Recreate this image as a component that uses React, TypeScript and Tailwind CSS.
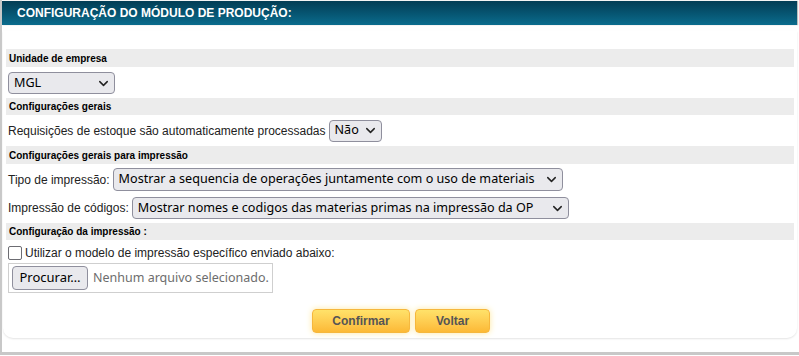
import { ChevronDown } from "lucide-react";

type Opt = { label: string; width: string; height?: string };

function Select({ label, width, height = "h-[22px]" }: Opt) {
	return (
		<div
			className={`flex ${height} shrink-0 ${width} items-center justify-between rounded-[4px] border border-[#8f8f9d] bg-[#e9e9ed] pl-[5px] pr-[3px] text-[12.6px] text-black`}
			style={{ fontFamily: '"Noto Sans", sans-serif' }}
		>
			<span className="whitespace-nowrap leading-none">{label}</span>
			<ChevronDown className="h-[15px] w-[15px] shrink-0 text-[#222]" strokeWidth={2.3} />
		</div>
	);
}

function SectionTitle({ children, h = "h-[18px]" }: { children: React.ReactNode; h?: string }) {
	return (
		<div className={`flex ${h} items-center bg-[#ececec] px-[3px] text-[10px] font-bold text-black`}>
			{children}
		</div>
	);
}

export default function App() {
	return (
		<div
			className="h-[356px] w-[799px] bg-white"
			style={{ fontFamily: '"Liberation Sans", Arial, sans-serif' }}
		>
			<div className="h-[355px] border-b-[3px] border-l-[2px] border-[#c8c8c8] pt-px">
				<div className="flex h-[24px] w-[795px] items-center bg-gradient-to-b from-[#033d55] to-[#0b6c8d] pl-[15px] text-[12px] font-bold text-white shadow-[1px_0_1px_#bbb]">
					CONFIGURAÇÃO DO MÓDULO DE PRODUÇÃO:
				</div>
				<div className="ml-px mt-[6px] h-[307px] w-[794px] rounded-b-[10px] shadow-[0_1px_2px_#e4e4e4] px-[3px] pt-[18px]">
					<div className="w-[788px]">
						<SectionTitle>Unidade de empresa</SectionTitle>
						<div className="h-[31px] px-[2px] pt-[5px]">
							<Select label="MGL" width="w-[107px]" />
						</div>
						<SectionTitle h="h-[17px]">Configurações gerais</SectionTitle>
						<div className="flex h-[31px] items-center gap-[3px] whitespace-nowrap px-[2px] text-[12px] text-[#222]">
							<span>Requisições de estoque são automaticamente processadas</span>
							<Select label="Não" width="w-[53px]" />
						</div>
						<SectionTitle>Configurações gerais para impressão</SectionTitle>
						<div className="flex items-center gap-[3px] whitespace-nowrap px-[2px] pt-[4px] text-[12px] text-[#222]">
							<span>Tipo de impressão:</span>
							<Select
								label="Mostrar a sequencia de operações juntamente com o uso de materiais"
								width="w-[450px]"
								height="h-[23px]"
							/>
						</div>
						<div className="flex items-center gap-[3px] whitespace-nowrap px-[2px] pb-[4px] pt-[6px] text-[12px] text-[#222]">
							<span>Impressão de códigos:</span>
							<Select
								label="Mostrar nomes e codigos das materias primas na impressão da OP"
								width="w-[437px]"
							/>
						</div>
						<SectionTitle h="h-[17px]">Configuração da impressão :</SectionTitle>
						<div className="flex h-[21px] items-end gap-[3px] whitespace-nowrap px-[2px] text-[12px] text-[#222]">
							<span className="mb-[1px] h-[14px] w-[14px] rounded-[2px] border-[1.5px] border-[#6c6c72] bg-white" />
							<span className="leading-[16px]">Utilizar o modelo de impressão específico enviado abaixo:</span>
						</div>
						<div
							className="ml-[2px] mt-[2px] flex h-[30px] w-[265px] items-center gap-[5px] whitespace-nowrap border border-[#cfcfcf] px-[3px] text-[13px]"
							style={{ fontFamily: '"Noto Sans", sans-serif' }}
						>
							<span className="flex h-[24px] w-[76px] items-center justify-center rounded-[4px] border border-[#8f8f9d] bg-[#e9e9ed] text-black">
								Procurar…
							</span>
							<span className="text-[12.5px] text-[#6d6d6d]">Nenhum arquivo selecionado.</span>
						</div>
						<div className="mt-[16px] flex justify-center gap-[5px] pl-[2px]">
							<button className="h-[24px] w-[98px] rounded-[4px] border border-[#f6b73c] bg-gradient-to-b from-[#ffe26a] to-[#fcb935] text-[12px] font-bold text-[#555] shadow-[0_0_6px_#ffe9a0]">
								Confirmar
							</button>
							<button className="h-[24px] w-[75px] rounded-[4px] border border-[#f6b73c] bg-gradient-to-b from-[#ffe26a] to-[#fcb935] text-[12px] font-bold text-[#555] shadow-[0_0_6px_#ffe9a0]">
								Voltar
							</button>
						</div>
					</div>
				</div>
			</div>
		</div>
	);
}
